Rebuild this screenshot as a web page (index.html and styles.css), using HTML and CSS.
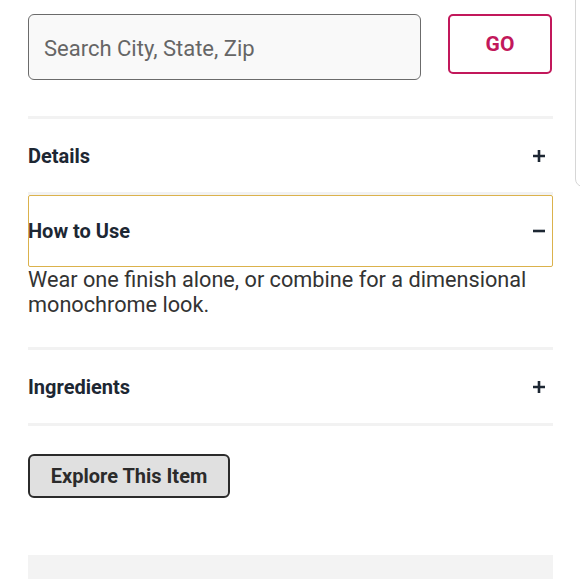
FILE: index.html
```html
<!DOCTYPE html>
<html lang="en">
<head>
    <meta charset="UTF-8">
    <meta name="viewport" content="width=device-width, initial-scale=1.0">
    <title>Product Info</title>
    <link rel="stylesheet" href="styles.css">
</head>
<body>
    <div class="page">
        <!-- Store search -->
        <div class="search-row">
            <input type="text" class="search-input" placeholder="Search City, State, Zip">
            <button class="go-btn">GO</button>
        </div>

        <!-- Accordion -->
        <div class="accordion">
            <div class="acc-item">
                <div class="acc-head">
                    <span>Details</span>
                    <svg class="acc-icon" width="14" height="14" viewBox="0 0 14 14"><path d="M7 1v12M1 7h12" stroke="#1d2733" stroke-width="2.6"/></svg>
                </div>
            </div>
            <div class="acc-item open">
                <div class="acc-head focused">
                    <span>How to Use</span>
                    <svg class="acc-icon" width="14" height="14" viewBox="0 0 14 14"><path d="M1 7h12" stroke="#1d2733" stroke-width="2.6"/></svg>
                </div>
                <div class="acc-body">Wear one finish alone, or combine for a dimensional monochrome look.</div>
            </div>
            <div class="acc-item">
                <div class="acc-head">
                    <span>Ingredients</span>
                    <svg class="acc-icon" width="14" height="14" viewBox="0 0 14 14"><path d="M7 1v12M1 7h12" stroke="#1d2733" stroke-width="2.6"/></svg>
                </div>
            </div>
        </div>

        <button class="explore-btn">Explore This Item</button>

        <div class="gray-panel"></div>
    </div>

    <div class="edge-overlay"></div>
</body>
</html>
```

FILE: styles.css
```css
body {
    margin: 0;
    font-family: Roboto, "Noto Sans", Arial, sans-serif;
    background: #fff;
    overflow: hidden;
}
.page {
    width: 525px;
    padding: 14px 0 0 28px;
}
.search-row {
    display: flex;
    align-items: flex-start;
    gap: 27px;
}
.search-input {
    width: 393px;
    height: 66px;
    box-sizing: border-box;
    border: 1.5px solid #6b6b6b;
    border-radius: 6px;
    background: #f9f9f9;
    padding: 2px 15px 0;
    font-family: inherit;
    font-size: 22px;
    color: #333;
}
.search-input::placeholder {
    color: #666;
}
.go-btn {
    width: 104px;
    height: 60px;
    box-sizing: border-box;
    border: 2px solid #c2185b;
    border-radius: 5px;
    background: #fff;
    color: #c2185b;
    font-family: inherit;
    font-size: 21px;
    font-weight: 700;
}
.accordion {
    margin-top: 36px;
    border-top: 3px solid #f2f2f2;
}
.acc-item {
    border-bottom: 3px solid #f2f2f2;
}
.acc-head {
    height: 73px;
    display: flex;
    align-items: center;
    justify-content: space-between;
    padding-right: 7px;
    font-size: 20px;
    font-weight: 700;
    color: #1d2733;
}
.acc-head.focused {
    height: 72px;
    outline: 1.5px solid #dbb24c;
    outline-offset: -1.5px;
    border-radius: 2px;
}
.acc-icon {
    display: block;
}
.acc-body {
    font-size: 21.7px;
    line-height: 25px;
    color: #333;
    padding-bottom: 30px;
}
.explore-btn {
    margin-top: 28px;
    width: 202px;
    height: 44px;
    border: 2px solid #2b2b2b;
    border-radius: 6px;
    background: #e0e0e0;
    color: #2b2b2b;
    font-family: inherit;
    font-size: 20px;
    font-weight: 700;
    display: block;
}
.gray-panel {
    margin-top: 57px;
    height: 40px;
    background: #f3f3f3;
}
.edge-overlay {
    position: absolute;
    top: -10px;
    left: 575px;
    width: 20px;
    height: 195px;
    border: 1px solid #d6d6d6;
    border-radius: 0 0 0 8px;
    background: #fff;
}
```
